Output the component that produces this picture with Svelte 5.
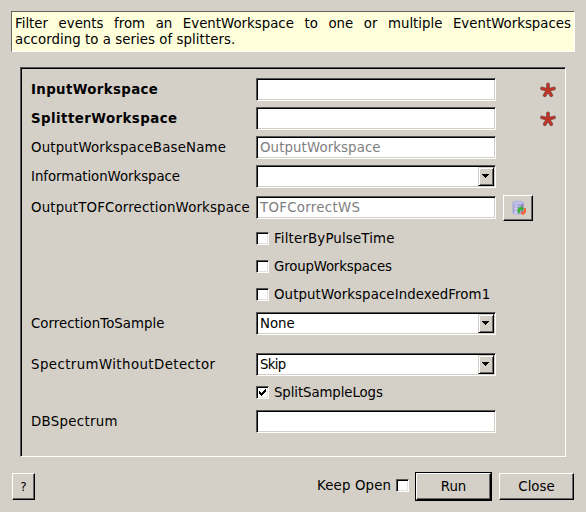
<script>
  const rows = [
    { label: 'InputWorkspace', kind: 'text', required: true, ls: 0.37 },
    { label: 'SplitterWorkspace', kind: 'text', required: true, ls: 0.45 },
    { label: 'OutputWorkspaceBaseName', kind: 'text', hint: 'OutputWorkspace', ls: 0.18, vls: 0.1 },
    { label: 'InformationWorkspace', kind: 'combo', ls: -0.05 },
    { label: 'OutputTOFCorrectionWorkspace', kind: 'text', hint: 'TOFCorrectWS', replace: true, ls: 0.16, vls: 0.3 },
    { label: 'FilterByPulseTime', kind: 'check', ls: 0.17 },
    { label: 'GroupWorkspaces', kind: 'check', ls: -0.18 },
    { label: 'OutputWorkspaceIndexedFrom1', kind: 'check', ls: 0.1 },
    { label: 'CorrectionToSample', kind: 'combo', value: 'None', tall: true, ls: 0.03, vls: 0 },
    { label: 'SpectrumWithoutDetector', kind: 'combo', value: 'Skip', spaced: true, ls: 0.42, vls: -0.7 },
    { label: 'SplitSampleLogs', kind: 'check', checked: true, ls: -0.1 },
    { label: 'DBSpectrum', kind: 'text', ls: 0.3 }
  ];
</script>

{#snippet box(checked)}
  <span class="checkbox">
    {#if checked}
      <svg width="9" height="9" viewBox="0 0 9 9" shape-rendering="crispEdges">
        <path d="M1 3h1v1h1v1h1v-1h1v-1h1v-1h1v-1h1v3h-1v1h-1v1h-1v1h-1v1h-1v-1h-1v-1h-1z" />
      </svg>
    {/if}
  </span>
{/snippet}

<main>
  <div class="summary">
    <div class="line first"><span>Filter</span> <span>events</span> <span>from</span> <span>an</span> <span>EventWorkspace</span> <span>to</span> <span>one</span> <span>or</span> <span>multiple</span> <span>EventWorkspaces</span></div>
    <div class="line second">according to a series of splitters.</div>
  </div>

  <section class="panel">
    {#each rows as r}
      <div class="row {r.kind}" class:replace={r.replace} class:tall={r.tall} class:spaced={r.spaced} class:on={r.checked}>
        {#if r.kind === 'check'}
          {@render box(r.checked)}
          <span class="caption" style="letter-spacing: {r.ls}px">{r.label}</span>
        {:else}
          <span class="label" class:required={r.required} style="letter-spacing: {r.ls}px">{r.label}</span>
          <div class="field">
            <span class="value" class:hint={r.hint} style="letter-spacing: {r.vls ?? 0}px">{r.hint ?? r.value ?? ''}</span>
            {#if r.kind === 'combo'}
              <span class="drop">
                <svg width="7" height="4" viewBox="0 0 7 4" shape-rendering="crispEdges"><path d="M0 0h7v1h-1v1h-1v1h-1v1h-1v-1h-1v-1h-1v-1h-1z" /></svg>
              </span>
            {/if}
          </div>
          {#if r.replace}
            <button class="raised db" aria-label="Replace input workspace">
              <svg width="16" height="16" viewBox="0 0 16 16">
                <path d="M1.500 2.800v10c0 1.200 2.400 2 5.500 2s5.500-.8 5.500-2v-10z" fill="#a9a9da" />
                <path d="M3.500 4v10c1 .4 2 .6 3 .6V4z" fill="#cacaf0" />
                <path d="M10 4v10.300c1.500-.4 2.500-.9 2.500-1.500v-10z" fill="#8484b8" />
                <ellipse cx="7" cy="2.800" rx="5.500" ry="1.800" fill="#c0c0ea" stroke="#a2a2d0" stroke-width=".6" />
                <path d="M1.500 6.300c2 1.400 9 1.400 11 0M1.500 9.600c2 1.400 9 1.400 11 0" fill="none" stroke="#9494c8" stroke-width=".5" />
                <path d="M6.700 13V9l1.800-1.900h1.700V5.900l2.800 2.800-2.800 2.600v-1.300h-1.300V13z" fill="#35b52c" />
                <path d="M15 8v4.300l-1.600 1.900h-1.100v1.500L9.700 13l2.600-2.600v1.300h.8V8z" fill="#fb6236" />
              </svg>
            </button>
          {/if}
          {#if r.required}
            <svg class="star" width="16" height="16" viewBox="0 0 16 16">
              <g stroke-linecap="round" fill="none">
                <path d="M8 8V2.300M8 8L2 6.500M8 8l6-1.500M8 8l-3.300 5.200M8 8l3.300 5.200" stroke="#76605a" stroke-width="3.700" />
                <path d="M8 8V2.300M8 8L2 6.500M8 8l6-1.500M8 8l-3.300 5.200M8 8l3.300 5.200" stroke="#bd3326" stroke-width="2.600" />
              </g>
            </svg>
          {/if}
        {/if}
      </div>
    {/each}
  </section>

  <footer>
    <button class="raised help">?</button>
    <span class="keep">Keep Open</span>
    {@render box(false)}
    <div class="default"><button class="raised">Run</button></div>
    <button class="raised close">Close</button>
  </footer>
</main>

<style>
  :global(body) { background: #d4d0c8; }
  main {
    box-sizing: border-box;
    width: 586px;
    height: 512px;
    padding: 11px 11px 0;
    background: #d4d0c8;
    color: #000;
    font: 13.333px/16px "DejaVu Sans", sans-serif;
    white-space: nowrap;
  }
  .summary {
    box-sizing: border-box;
    width: 564px;
    height: 41px;
    padding: 4px 3px 0;
    border: 1px solid;
    border-color: #666 #fff #fff #666;
    background: #ffffdc;
  }
  .first { display: flex; justify-content: space-between; }
  .second { letter-spacing: 0.05px; }
  .panel {
    box-sizing: border-box;
    width: 546px;
    height: 390px;
    margin: 15px 0 0 9px;
    padding: 7px 0 0 10px;
    border: 1px solid;
    border-color: #555 #fff #fff #555;
    box-shadow: inset 1px 1px #000;
  }
  .row { display: flex; align-items: center; height: 29px; }
  .replace { height: 33px; }
  .tall { height: 31px; }
  .spaced { margin-top: 11px; }
  .check { box-sizing: border-box; height: 28px; align-items: flex-start; padding: 8px 0 0 225px; }
  .on { padding-top: 7px; }
  .label { width: 225px; flex: none; }
  .required { font-weight: bold; }
  .field {
    box-sizing: border-box;
    display: flex;
    align-items: center;
    justify-content: space-between;
    flex: none;
    width: 240px;
    height: 23px;
    padding: 0 1px 0 3px;
    border: 1px solid;
    border-color: #555 #fff #fff #555;
    background: #fff;
    box-shadow: inset 1px 1px #000, inset -1px -1px #d4d0c8;
  }
  .hint { color: #808080; }
  .drop {
    box-sizing: border-box;
    display: flex;
    justify-content: center;
    width: 16px;
    height: 19px;
    padding: 6px 1px 0 0;
    border: 1px solid;
    border-color: #d4d0c8 #000 #000 #d4d0c8;
    background: #d4d0c8;
    box-shadow: inset 1px 1px #fff, inset -1px -1px #666;
  }
  .checkbox {
    box-sizing: border-box;
    display: block;
    flex: none;
    width: 13px;
    height: 13px;
    padding: 1px;
    border: 1px solid;
    border-color: #555 #fff #fff #555;
    background: #fff;
    box-shadow: inset 1px 1px #000, inset -1px -1px #e4e2de;
  }
  .checkbox svg, .drop svg, .db svg { display: block; }
  .caption { margin: -1px 0 0 5px; }
  .raised {
    box-sizing: border-box;
    margin: 0;
    padding: 0;
    border: 1px solid;
    border-color: #fff #000 #000 #fff;
    border-radius: 0;
    background: #d4d0c8;
    box-shadow: inset -1px -1px #666;
    color: #000;
    font: inherit;
    height: 27px;
  }
  .db {
    display: flex;
    align-items: center;
    justify-content: center;
    width: 30px;
    height: 26px;
    align-self: flex-start;
    margin: 4px 0 0 7px;
    padding: 0 0 0 2px;
  }
  .star { margin-left: 44px; }
  footer { display: flex; align-items: flex-start; padding: 16px 0 0 1px; }
  .help { width: 23px; font-size: 12px; }
  .keep { margin: 5px 0 0 282px; width: 79px; letter-spacing: 0.15px; }
  footer .checkbox { margin-top: 6px; }
  .default { margin: -1px 0 0 6px; border: 1px solid #000; }
  .default .raised { display: block; width: 75px; }
  .close { width: 75px; margin-left: 7px; }
</style>
